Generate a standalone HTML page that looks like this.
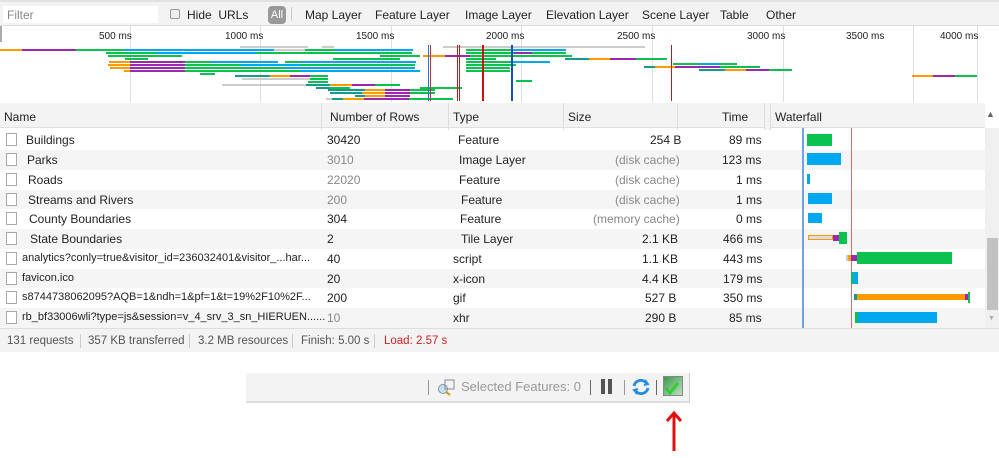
<!DOCTYPE html>
<html><head><meta charset="utf-8"><style>
*{margin:0;padding:0;box-sizing:border-box}
body{width:999px;height:458px;background:#fff;font-family:"Liberation Sans",sans-serif;font-size:12px;color:#222;position:relative;overflow:hidden}
.a{position:absolute}
.b{position:absolute;height:2px}
.g{background:#0bc24f}.bl{background:#00a8f0}.o{background:#ff9a00}.p{background:#9c27b0}.t{background:#169b8a}.gy{background:#ccc}
.vl{position:absolute;width:1px;top:45px;height:56px}
.hdr{position:absolute;top:103px;height:25px;background:#f3f3f3;border-bottom:1px solid #e0e0e0}
.row{position:absolute;left:0;width:985px;height:20px}
.cell{position:absolute;top:3px;font-size:12px;white-space:nowrap}
.cb{position:absolute;left:6px;top:3px;width:11px;height:13px;border:1px solid #aaa;background:#fff}
.st{position:absolute;top:335px;font-size:11.5px;color:#555}
</style></head><body>
<div class="a" style="left:0;top:0;width:999px;height:26px;background:#f3f3f3;border-top:2px solid #e2e2e2;border-bottom:1px solid #ddd"></div>
<div class="a" style="left:3px;top:6px;width:155px;height:17px;background:#fff"></div>
<div class="a" style="left:7px;top:8px;color:#888;font-size:12px">Filter</div>
<div class="a" style="left:170px;top:9px;width:10px;height:10px;border:1px solid #999;background:#eee;border-radius:2px"></div>
<div class="a" style="left:187px;top:8px;font-size:12px">Hide&nbsp; URLs</div>
<div class="a" style="left:268px;top:6px;width:18px;height:18px;background:#999;border-radius:4px;color:#fff;font-size:11px;text-align:center;line-height:18px">All</div>
<div class="a" style="left:291px;top:7px;width:1px;height:14px;background:#ccc"></div>
<div class="a" style="left:305px;top:8px;font-size:12px">Map Layer</div>
<div class="a" style="left:375px;top:8px;font-size:12px">Feature Layer</div>
<div class="a" style="left:465px;top:8px;font-size:12px">Image Layer</div>
<div class="a" style="left:546px;top:8px;font-size:12px">Elevation Layer</div>
<div class="a" style="left:642px;top:8px;font-size:12px">Scene Layer</div>
<div class="a" style="left:720px;top:8px;font-size:12px">Table</div>
<div class="a" style="left:766px;top:8px;font-size:12px">Other</div>
<div class="a" style="left:0;top:26px;width:2px;height:16px;background:#aaa"></div>
<div class="a" style="left:130px;top:26px;width:1px;height:76px;background:#ddd"></div>
<div class="a" style="left:260px;top:26px;width:1px;height:76px;background:#ddd"></div>
<div class="a" style="left:391px;top:26px;width:1px;height:76px;background:#ddd"></div>
<div class="a" style="left:521px;top:26px;width:1px;height:76px;background:#ddd"></div>
<div class="a" style="left:652px;top:26px;width:1px;height:76px;background:#ddd"></div>
<div class="a" style="left:783px;top:26px;width:1px;height:76px;background:#ddd"></div>
<div class="a" style="left:913px;top:26px;width:1px;height:76px;background:#ddd"></div>
<div class="a" style="left:977px;top:26px;width:1px;height:76px;background:#ddd"></div>
<div class="a" style="left:99px;top:31px;font-size:10px">500 ms</div>
<div class="a" style="left:225px;top:31px;font-size:10px">1000 ms</div>
<div class="a" style="left:356px;top:31px;font-size:10px">1500 ms</div>
<div class="a" style="left:486px;top:31px;font-size:10px">2000 ms</div>
<div class="a" style="left:617px;top:31px;font-size:10px">2500 ms</div>
<div class="a" style="left:747px;top:31px;font-size:10px">3000 ms</div>
<div class="a" style="left:846px;top:31px;font-size:10px">3500 ms</div>
<div class="a" style="left:940px;top:31px;font-size:10px">4000 ms</div>
<div class="b gy" style="left:240px;top:46px;width:68px"></div>
<div class="b gy" style="left:322px;top:46px;width:12px"></div>
<div class="b gy" style="left:443px;top:46px;width:202px"></div>
<div class="b o" style="left:0;top:49px;width:22px"></div><div class="b p" style="left:22px;top:49px;width:54px"></div><div class="b g" style="left:76px;top:49px;width:48px"></div><div class="b bl" style="left:124px;top:49px;width:150px"></div><div class="b gy" style="left:274px;top:49px;width:31px"></div><div class="b g" style="left:305px;top:49px;width:30px"></div><div class="b bl" style="left:335px;top:49px;width:78px"></div><div class="b g" style="left:466px;top:49px;width:44px"></div><div class="b bl" style="left:510px;top:49px;width:56px"></div>
<div class="b g" style="left:106px;top:52px;width:50px"></div><div class="b bl" style="left:156px;top:52px;width:100px"></div><div class="b g" style="left:256px;top:52px;width:156px"></div><div class="b g" style="left:466px;top:52px;width:48px"></div><div class="b p" style="left:514px;top:52px;width:18px"></div><div class="b g" style="left:532px;top:52px;width:34px"></div>
<div class="b g" style="left:108px;top:55px;width:74px"></div><div class="b g" style="left:380px;top:55px;width:40px"></div><div class="b o" style="left:423px;top:55px;width:22px"></div><div class="b p" style="left:445px;top:55px;width:25px"></div><div class="b g" style="left:470px;top:55px;width:40px"></div><div class="b g" style="left:510px;top:55px;width:62px"></div>
<div class="b g" style="left:125px;top:58px;width:23px"></div><div class="b g" style="left:333px;top:58px;width:67px"></div><div class="b g" style="left:466px;top:58px;width:30px"></div><div class="b t" style="left:565px;top:58px;width:24px"></div><div class="b o" style="left:589px;top:58px;width:21px"></div><div class="b p" style="left:610px;top:58px;width:26px"></div><div class="b g" style="left:636px;top:58px;width:31px"></div>
<div class="b o" style="left:109px;top:61px;width:21px"></div><div class="b p" style="left:130px;top:61px;width:55px"></div><div class="b g" style="left:185px;top:61px;width:25px"></div><div class="b bl" style="left:210px;top:61px;width:68px"></div><div class="b g" style="left:285px;top:61px;width:15px"></div><div class="b bl" style="left:300px;top:61px;width:116px"></div><div class="b g" style="left:466px;top:61px;width:44px"></div><div class="b bl" style="left:510px;top:61px;width:40px"></div>
<div class="b o" style="left:108px;top:64px;width:22px"></div><div class="b p" style="left:130px;top:64px;width:55px"></div><div class="b g" style="left:185px;top:64px;width:55px"></div><div class="b bl" style="left:240px;top:64px;width:60px"></div><div class="b g" style="left:300px;top:64px;width:115px"></div><div class="b g" style="left:466px;top:64px;width:50px"></div><div class="b g" style="left:673px;top:63px;width:25px"></div><div class="b bl" style="left:698px;top:63px;width:22px"></div><div class="b g" style="left:720px;top:63px;width:17px"></div>
<div class="b o" style="left:110px;top:67px;width:20px"></div><div class="b p" style="left:130px;top:67px;width:55px"></div><div class="b g" style="left:185px;top:67px;width:100px"></div><div class="b bl" style="left:285px;top:67px;width:130px"></div><div class="b g" style="left:466px;top:67px;width:44px"></div><div class="b t" style="left:644px;top:66px;width:11px"></div><div class="b o" style="left:655px;top:66px;width:20px"></div><div class="b p" style="left:675px;top:66px;width:45px"></div><div class="b g" style="left:720px;top:66px;width:40px"></div>
<div class="b o" style="left:124px;top:70px;width:6px"></div><div class="b p" style="left:130px;top:70px;width:55px"></div><div class="b g" style="left:185px;top:70px;width:115px"></div><div class="b bl" style="left:300px;top:70px;width:120px"></div><div class="b g" style="left:466px;top:70px;width:44px"></div><div class="b t" style="left:699px;top:69px;width:26px"></div><div class="b o" style="left:725px;top:69px;width:21px"></div><div class="b p" style="left:746px;top:69px;width:23px"></div><div class="b g" style="left:769px;top:69px;width:23px"></div>
<div class="b g" style="left:200px;top:73px;width:15px"></div>
<div class="b t" style="left:235px;top:75px;width:35px"></div><div class="b o" style="left:270px;top:75px;width:20px"></div><div class="b p" style="left:290px;top:75px;width:20px"></div><div class="b g" style="left:310px;top:75px;width:18px"></div><div class="b o" style="left:912px;top:75px;width:21px"></div><div class="b p" style="left:933px;top:75px;width:22px"></div><div class="b g" style="left:955px;top:75px;width:22px"></div>
<div class="b gy" style="left:242px;top:78px;width:68px"></div><div class="b g" style="left:310px;top:78px;width:18px"></div>
<div class="b g" style="left:308px;top:81px;width:20px"></div><div class="b g" style="left:516px;top:80px;width:16px"></div>
<div class="b gy" style="left:222px;top:84px;width:84px"></div><div class="b t" style="left:306px;top:84px;width:24px"></div><div class="b o" style="left:330px;top:84px;width:22px"></div><div class="b p" style="left:352px;top:84px;width:23px"></div><div class="b g" style="left:375px;top:84px;width:25px"></div>
<div class="b t" style="left:316px;top:87px;width:14px"></div><div class="b g" style="left:330px;top:87px;width:20px"></div><div class="b g" style="left:420px;top:87px;width:42px"></div>
<div class="b t" style="left:328px;top:89px;width:37px"></div><div class="b o" style="left:365px;top:89px;width:20px"></div><div class="b p" style="left:385px;top:89px;width:25px"></div><div class="b g" style="left:410px;top:89px;width:25px"></div>
<div class="b t" style="left:330px;top:92px;width:32px"></div><div class="b o" style="left:362px;top:92px;width:23px"></div><div class="b p" style="left:385px;top:92px;width:25px"></div><div class="b g" style="left:410px;top:92px;width:25px"></div>
<div class="b t" style="left:355px;top:95px;width:10px"></div><div class="b o" style="left:365px;top:95px;width:20px"></div><div class="b p" style="left:385px;top:95px;width:25px"></div>
<div class="b gy" style="left:326px;top:98px;width:6px"></div><div class="b t" style="left:332px;top:98px;width:11px"></div><div class="b o" style="left:343px;top:98px;width:21px"></div><div class="b p" style="left:364px;top:98px;width:45px"></div><div class="b g" style="left:409px;top:98px;width:44px"></div>
<div class="vl" style="left:428px;background:#2a6fd6"></div><div class="vl" style="left:430px;background:#b33"></div>
<div class="vl" style="left:457px;background:#a22"></div><div class="vl" style="left:459px;background:#a22"></div>
<div class="vl" style="left:482px;width:2px;background:#c11"></div>
<div class="vl" style="left:511px;width:2px;background:#1a4fb0"></div>
<div class="vl" style="left:671px;background:#a22"></div>
<div class="hdr" style="left:0;width:985px"></div>
<div class="a" style="left:321px;top:103px;width:1px;height:225px;background:#ddd"></div>
<div class="a" style="left:448px;top:103px;width:1px;height:225px;background:#ddd"></div>
<div class="a" style="left:563px;top:103px;width:1px;height:225px;background:#ddd"></div>
<div class="a" style="left:677px;top:103px;width:1px;height:225px;background:#ddd"></div>
<div class="a" style="left:764px;top:103px;width:7px;height:225px;border-left:1px solid #ddd;border-right:1px solid #ddd;background:#f3f3f3"></div>
<div class="a" style="left:4px;top:110px">Name</div>
<div class="a" style="left:330px;top:110px">Number of Rows</div>
<div class="a" style="left:453px;top:110px">Type</div>
<div class="a" style="left:568px;top:110px">Size</div>
<div class="a" style="left:722px;top:110px">Time</div>
<div class="a" style="left:775px;top:110px">Waterfall</div>
<div class="a" style="left:986px;top:109px;font-size:9px;color:#666">▲</div>
<div class="a" style="left:985px;top:128px;width:14px;height:200px;background:#f0f0f0"></div>
<div class="a" style="left:987px;top:238px;width:11px;height:72px;background:#c2c2c2"></div>
<div class="a" style="left:988px;top:315px;font-size:7px;color:#aaa">▼</div>
<div class="row" style="top:130px;background:#fff"><div class="cb"></div><div class="cell" style="left:26px">Buildings</div><div class="cell" style="left:327px">30420</div><div class="cell" style="left:458px">Feature</div><div class="cell" style="left:650px">254 B</div><div class="cell" style="left:729px">89 ms</div></div>
<div class="row" style="top:150px;background:#f5f5f5"><div class="cb"></div><div class="cell" style="left:27px">Parks</div><div class="cell" style="left:327px;color:#888">3010</div><div class="cell" style="left:459px">Image Layer</div><div class="cell" style="left:615px;color:#888">(disk cache)</div><div class="cell" style="left:722px">123 ms</div></div>
<div class="row" style="top:170px;background:#fff"><div class="cb"></div><div class="cell" style="left:28px">Roads</div><div class="cell" style="left:327px;color:#888">22020</div><div class="cell" style="left:459px">Feature</div><div class="cell" style="left:615px;color:#888">(disk cache)</div><div class="cell" style="left:736px">1 ms</div></div>
<div class="row" style="top:190px;background:#f5f5f5"><div class="cb"></div><div class="cell" style="left:28px">Streams and Rivers</div><div class="cell" style="left:327px;color:#888">200</div><div class="cell" style="left:461px">Feature</div><div class="cell" style="left:615px;color:#888">(disk cache)</div><div class="cell" style="left:736px">1 ms</div></div>
<div class="row" style="top:209px;background:#fff"><div class="cb"></div><div class="cell" style="left:29px">County Boundaries</div><div class="cell" style="left:327px">304</div><div class="cell" style="left:460px">Feature</div><div class="cell" style="left:593px;color:#888">(memory cache)</div><div class="cell" style="left:736px">0 ms</div></div>
<div class="row" style="top:229px;background:#f5f5f5"><div class="cb"></div><div class="cell" style="left:30px">State Boundaries</div><div class="cell" style="left:327px">2</div><div class="cell" style="left:461px">Tile Layer</div><div class="cell" style="left:642px">2.1 KB</div><div class="cell" style="left:723px">466 ms</div></div>
<div class="row" style="top:249px;background:#fff"><div class="cb"></div><div class="cell" style="left:22px;font-size:11px">analytics?conly=true&amp;visitor_id=236032401&amp;visitor_...har...</div><div class="cell" style="left:327px">40</div><div class="cell" style="left:453px">script</div><div class="cell" style="left:642px">1.1 KB</div><div class="cell" style="left:723px">443 ms</div></div>
<div class="row" style="top:269px;background:#f5f5f5"><div class="cb"></div><div class="cell" style="left:22px;font-size:11px">favicon.ico</div><div class="cell" style="left:327px">20</div><div class="cell" style="left:453px">x-icon</div><div class="cell" style="left:642px">4.4 KB</div><div class="cell" style="left:723px">179 ms</div></div>
<div class="row" style="top:288px;background:#fff"><div class="cb"></div><div class="cell" style="left:22px;font-size:11px">s8744738062095?AQB=1&amp;ndh=1&amp;pf=1&amp;t=19%2F10%2F...</div><div class="cell" style="left:327px">200</div><div class="cell" style="left:453px">gif</div><div class="cell" style="left:645px">527 B</div><div class="cell" style="left:723px">350 ms</div></div>
<div class="row" style="top:308px;background:#f5f5f5"><div class="cb"></div><div class="cell" style="left:22px;font-size:11px">rb_bf33006wli?type=js&amp;session=v_4_srv_3_sn_HIERUEN......</div><div class="cell" style="left:327px;color:#888">10</div><div class="cell" style="left:453px">xhr</div><div class="cell" style="left:645px">290 B</div><div class="cell" style="left:729px">85 ms</div></div>
<div class="a" style="left:802px;top:128px;width:2px;height:200px;background:#6fa3e6"></div>
<div class="a" style="left:851px;top:128px;width:1px;height:200px;background:#d07070"></div>
<div class="a g" style="left:807px;top:134px;width:25px;height:12px"></div>
<div class="a bl" style="left:807px;top:153px;width:34px;height:12px"></div>
<div class="a bl" style="left:807px;top:174px;width:3px;height:10px"></div>
<div class="a bl" style="left:808px;top:193px;width:24px;height:11px"></div>
<div class="a bl" style="left:808px;top:213px;width:14px;height:10px"></div>
<div class="a" style="left:808px;top:235px;width:25px;height:5px;border:1px solid #f90;background:#ddd"></div><div class="a p" style="left:833px;top:235px;width:6px;height:6px"></div><div class="a g" style="left:839px;top:232px;width:8px;height:12px"></div>
<div class="a gy" style="left:846px;top:255px;width:2px;height:6px"></div><div class="a o" style="left:848px;top:255px;width:3px;height:6px"></div><div class="a p" style="left:851px;top:255px;width:6px;height:6px"></div><div class="a g" style="left:857px;top:252px;width:95px;height:12px"></div>
<div class="a g" style="left:851px;top:272px;width:2px;height:12px"></div><div class="a bl" style="left:853px;top:272px;width:5px;height:12px"></div>
<div class="a t" style="left:854px;top:294px;width:3px;height:6px"></div><div class="a o" style="left:857px;top:294px;width:108px;height:6px"></div><div class="a p" style="left:965px;top:294px;width:3px;height:6px"></div><div class="a g" style="left:968px;top:292px;width:2px;height:11px"></div>
<div class="a g" style="left:855px;top:312px;width:3px;height:11px"></div><div class="a bl" style="left:858px;top:312px;width:79px;height:11px"></div>
<div class="a" style="left:0;top:328px;width:999px;height:24px;background:#f3f3f3;border-top:1px solid #ddd"></div>
<div class="st" style="left:7px">131 requests</div>
<div class="a" style="left:80px;top:334px;width:1px;height:14px;background:#ccc"></div>
<div class="st" style="left:88px">357 KB transferred</div>
<div class="a" style="left:189px;top:334px;width:1px;height:14px;background:#ccc"></div>
<div class="st" style="left:198px">3.2 MB resources</div>
<div class="a" style="left:292px;top:334px;width:1px;height:14px;background:#ccc"></div>
<div class="st" style="left:301px">Finish: 5.00 s</div>
<div class="a" style="left:374px;top:334px;width:1px;height:14px;background:#ccc"></div>
<div class="st" style="left:384px;color:#c22">Load: 2.57 s</div>
<div class="a" style="left:246px;top:373px;width:444px;height:30px;background:#f3f3f3;border-bottom:2px solid #ddd;border-right:1px solid #ccc"></div>
<div class="a" style="left:428px;top:380px;width:1px;height:15px;background:#999"></div>
<div class="a" style="left:437px;top:378px;width:18px;height:18px"><svg width="18" height="18"><circle cx="6" cy="11" r="4.5" fill="#cde" stroke="#79a" stroke-width="1"/><line x1="9" y1="14" x2="13" y2="17" stroke="#c90" stroke-width="2"/><rect x="8" y="2" width="9" height="9" fill="none" stroke="#889"/></svg></div>
<div class="a" style="left:461px;top:379px;font-size:13px;color:#999">Selected Features: 0</div>
<div class="a" style="left:590px;top:380px;width:1px;height:15px;background:#666"></div>
<div class="a" style="left:601px;top:379px;width:4px;height:15px;background:#555"></div><div class="a" style="left:608px;top:379px;width:4px;height:15px;background:#555"></div>
<div class="a" style="left:624px;top:380px;width:1px;height:15px;background:#999"></div>
<div class="a" style="left:631px;top:377px;width:20px;height:20px"><svg width="20" height="20" fill="none" stroke="#2a8ee0" stroke-width="3"><path d="M3 9A7 7 0 0 1 16 7"/><path d="M17 11A7 7 0 0 1 4 13"/><path d="M14 3l3 4-4 1" stroke-width="2"/><path d="M6 17l-3-4 4-1" stroke-width="2"/></svg></div>
<div class="a" style="left:656px;top:380px;width:1px;height:15px;background:#666"></div>
<div class="a" style="left:663px;top:376px;width:20px;height:20px;border:1px solid #888;background:linear-gradient(135deg,#3a9a4a,#bfe0c6)"><svg width="18" height="18" style="position:absolute;left:0;top:0"><path d="M2 11l4 5 8-10" fill="none" stroke="#3c3" stroke-width="3"/></svg></div>
<svg class="a" style="left:664px;top:410px" width="20" height="42"><path d="M10 41V4M3 11l7-8 7 8" fill="none" stroke="#e01010" stroke-width="3"/></svg>
</body></html>
